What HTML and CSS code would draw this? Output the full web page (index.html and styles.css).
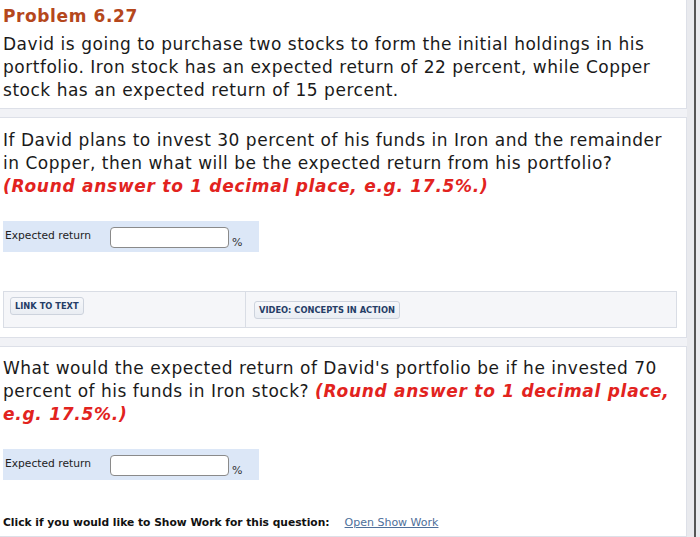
FILE: index.html
```html
<!DOCTYPE html>
<html>
<head>
<meta charset="utf-8">
<link rel="stylesheet" href="styles.css">
</head>
<body>
<div class="frame">
  <main class="main">
    <section class="panel panel-first">
      <h1 class="title">Problem 6.27</h1>
      <p class="text">David is going to purchase two stocks to form the initial holdings in his portfolio. Iron stock has an expected return of 22 percent, while Copper stock has an expected return of 15 percent.</p>
    </section>
    <section class="panel panel-second">
      <p class="text">If David plans to invest 30 percent of his funds in Iron and the remainder in Copper, then what will be the expected return from his portfolio? <span class="hint">(Round answer to 1 decimal place, e.g. 17.5%.)</span></p>
      <div class="answer-row">
        <span class="answer-label">Expected return</span>
        <span class="answer-input"></span>
        <span class="answer-unit">%</span>
      </div>
      <div class="links">
        <div class="links-cell links-left"><span class="btn">LINK TO TEXT</span></div>
        <div class="links-cell links-right"><span class="btn">VIDEO: CONCEPTS IN ACTION</span></div>
      </div>
    </section>
    <section class="panel panel-third">
      <p class="text">What would the expected return of David's portfolio be if he invested 70 percent of his funds in Iron stock? <span class="hint">(Round answer to 1 decimal place, e.g. 17.5%.)</span></p>
      <div class="answer-row answer-row-2">
        <span class="answer-label">Expected return</span>
        <span class="answer-input"></span>
        <span class="answer-unit">%</span>
      </div>
      <p class="showwork"><span class="showwork-label">Click if you would like to Show Work for this question:</span><a class="showwork-link" href="#">Open Show Work</a></p>
    </section>
  </main>
  <div class="gutter"><div class="gutter-line"></div></div>
</div>
</body>
</html>
```

FILE: styles.css
```css
html, body {
  margin: 0;
  padding: 0;
  background: #f1f2f6;
}
body {
  font-family: "DejaVu Sans", Verdana, sans-serif;
  color: #1a1a1a;
  height: 537px;
  overflow: hidden;
}
.frame {
  display: flex;
  height: 537px;
}
.main {
  width: 688px;
  display: flex;
  flex-direction: column;
  gap: 8px;
  margin-left: -1px;
}
.panel {
  background: #fff;
  border: 1px solid #dde0e8;
}
.panel-first {
  margin-top: -1px;
  padding: 5px 0 6px 3px;
}
.panel-second {
  padding: 11px 9px 9px 3px;
}
.panel-third {
  padding: 10px 0 0 3px;
  flex: 1;
}
.title {
  margin: 0 0 5px;
  font-size: 17px;
  line-height: 23px;
  font-weight: bold;
  letter-spacing: 0.6px;
  color: #b5471c;
}
.text {
  margin: 0;
  font-size: 17px;
  line-height: 23px;
  letter-spacing: 0.52px;
  width: 680px;
}
.hint {
  color: #e2231e;
  font-weight: bold;
  font-style: italic;
  letter-spacing: 0.72px;
}
.answer-row {
  margin-top: 23px;
  width: 256px;
  height: 31px;
  background: #dce7f7;
  display: flex;
  align-items: center;
  font-size: 10.7px;
}
.answer-row-2 {
  margin-top: 23px;
}
.answer-label {
  width: 105px;
  padding-left: 2px;
  color: #222;
  margin-top: -3px;
}
.answer-input {
  width: 117px;
  height: 19px;
  background: #fff;
  border: 1px solid #8a8a8a;
  border-radius: 4px;
  margin-top: 2px;
}
.answer-unit {
  margin-left: 3px;
  margin-top: 11px;
  font-size: 11px;
  color: #333;
}
.links {
  margin-top: 39px;
  display: flex;
  background: #f5f6f9;
  border: 1px solid #d9dde5;
  height: 35px;
}
.links-cell {
  display: flex;
  align-items: flex-start;
}
.links-left {
  width: 242px;
  border-right: 1px solid #d9dde5;
  padding: 5px 0 0 6px;
  box-sizing: border-box;
}
.links-right {
  padding: 9px 0 0 8px;
}
.btn {
  display: inline-block;
  font-size: 8.3px;
  font-weight: bold;
  color: #253d66;
  background: linear-gradient(#f7f8fb, #e9edf3);
  border: 1px solid #cdd3dd;
  border-radius: 3px;
  padding: 3px 4px;
  line-height: 10px;
}
.showwork {
  margin: 36px 0 0;
  font-size: 10.7px;
  display: flex;
  gap: 15px;
}
.showwork-label {
  font-weight: bold;
  color: #111;
}
.showwork-link {
  color: #4e6f9a;
  text-decoration: underline;
  font-size: 11px;
}
.gutter {
  flex: 1;
  background: #e9eaee;
  display: flex;
  justify-content: center;
}
.gutter-line {
  width: 2px;
  margin-left: 2px;
  background: #555;
}
```
